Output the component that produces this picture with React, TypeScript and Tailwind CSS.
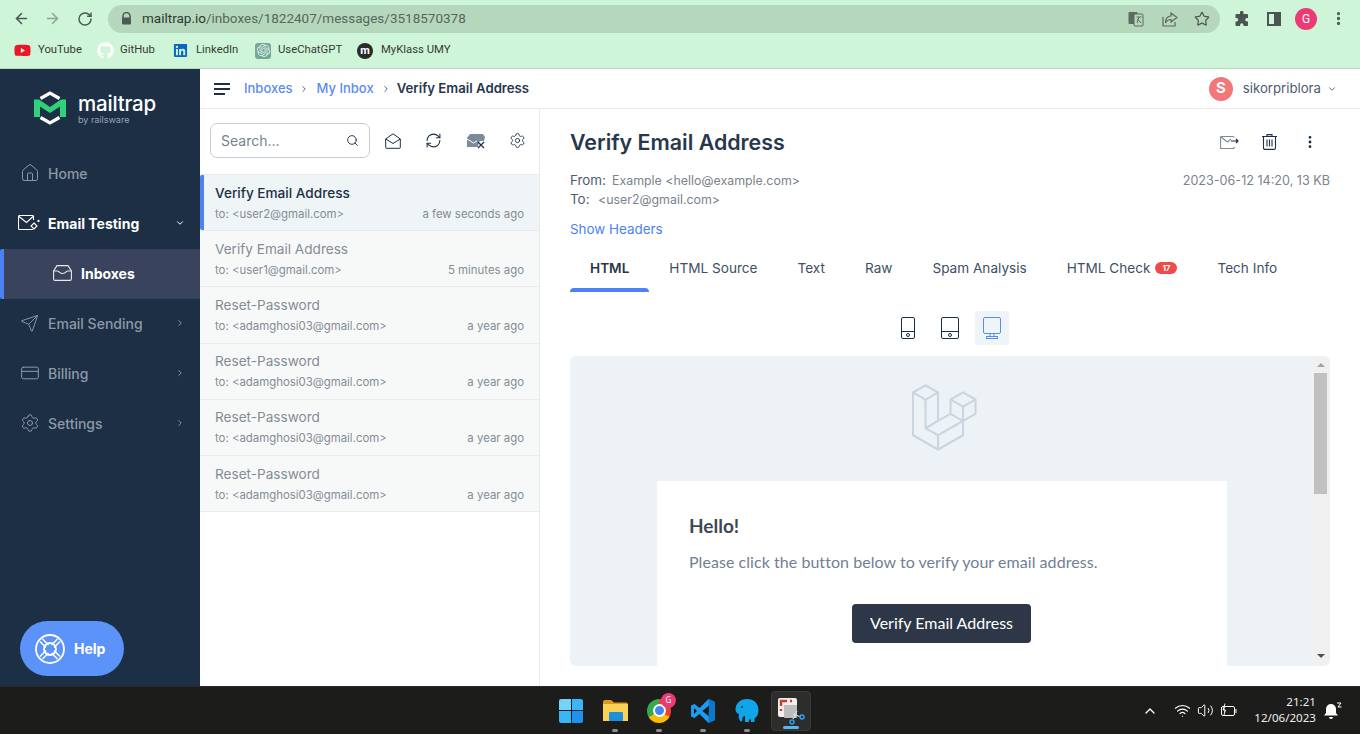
import { ArrowLeft, ArrowRight, RotateCw, Star, ChevronRight, ChevronDown, Search, Home, Send, CreditCard, Settings, MoreVertical, RefreshCw, Wifi, Volume2, ChevronUp } from 'lucide-react'
import { FaGithub, FaYoutube, FaLinkedin } from 'react-icons/fa'
import { SiOpenai } from 'react-icons/si'
import type { ReactNode } from 'react'

const LARAVEL = 'M49.626 11.564a.809.809 0 0 1 .028.209v10.972a.8.8 0 0 1-.402.694l-9.209 5.302V39.25c0 .286-.152.55-.4.694L20.42 51.01c-.044.025-.092.041-.14.058-.018.006-.035.017-.054.022a.805.805 0 0 1-.41 0c-.022-.006-.042-.018-.063-.026-.044-.016-.09-.03-.132-.054L.402 39.944A.801.801 0 0 1 0 39.25V6.334c0-.072.01-.142.028-.21.006-.023.02-.044.028-.067.015-.042.029-.085.051-.124.015-.026.037-.047.055-.071.023-.032.044-.065.071-.093.023-.023.053-.04.079-.06.029-.024.055-.05.088-.069h.001l9.61-5.533a.802.802 0 0 1 .8 0l9.61 5.533h.002c.032.02.059.045.088.068.026.02.055.038.078.06.028.029.048.062.072.094.017.024.04.045.054.071.023.04.036.082.052.124.008.023.022.044.028.068a.809.809 0 0 1 .028.209v20.559l8.008-4.611v-10.51c0-.07.01-.141.028-.208.007-.024.02-.045.028-.068.016-.042.03-.085.052-.124.015-.026.037-.047.054-.071.024-.032.044-.065.072-.093.023-.023.052-.04.078-.06.03-.024.056-.05.088-.069h.001l9.611-5.533a.801.801 0 0 1 .8 0l9.61 5.533c.034.02.06.045.09.068.025.02.054.038.077.06.028.029.048.062.072.094.018.024.04.045.054.071.023.039.036.082.052.124.009.023.022.044.028.068zm-1.574 10.718v-9.124l-3.363 1.936-4.646 2.675v9.124l8.01-4.611zm-9.61 16.505v-9.13l-4.57 2.61-13.05 7.448v9.216l17.62-10.144zM1.602 7.719v31.068L19.22 48.93v-9.214l-9.204-5.209-.003-.002-.004-.002c-.031-.018-.057-.044-.086-.066-.025-.02-.054-.036-.076-.058l-.002-.003c-.026-.025-.044-.056-.066-.084-.02-.027-.044-.05-.06-.078l-.001-.003c-.018-.03-.029-.066-.042-.1-.013-.03-.03-.058-.038-.09v-.001c-.01-.038-.012-.078-.016-.117-.004-.03-.012-.06-.012-.09v-.002-21.481L4.965 9.654 1.602 7.72zm8.81-5.994L2.405 6.334l8.005 4.609 8.006-4.61-8.006-4.608zm4.164 28.764l4.645-2.674V7.719l-3.363 1.936-4.646 2.675v20.096l3.364-1.937zM39.243 7.164l-8.006 4.609 8.006 4.609 8.005-4.61-8.005-4.608zm-.801 10.605l-4.646-2.675-3.363-1.936v9.124l4.645 2.674 3.364 1.937v-9.124zM20.02 38.33l11.743-6.704 5.87-3.35-8-4.606-9.211 5.303-8.395 4.833 7.993 4.524z'

const messages = [
  { subject: 'Verify Email Address', to: 'to: <user2@gmail.com>', when: 'a few seconds ago', active: true },
  { subject: 'Verify Email Address', to: 'to: <user1@gmail.com>', when: '5 minutes ago' },
  { subject: 'Reset-Password', to: 'to: <adamghosi03@gmail.com>', when: 'a year ago' },
  { subject: 'Reset-Password', to: 'to: <adamghosi03@gmail.com>', when: 'a year ago' },
  { subject: 'Reset-Password', to: 'to: <adamghosi03@gmail.com>', when: 'a year ago' },
  { subject: 'Reset-Password', to: 'to: <adamghosi03@gmail.com>', when: 'a year ago' },
]

const tabs = [
  { label: 'HTML', active: true },
  { label: 'HTML Source' },
  { label: 'Text' },
  { label: 'Raw' },
  { label: 'Spam Analysis' },
  { label: 'HTML Check', badge: '17' },
  { label: 'Tech Info' },
]

function Bookmark({ icon, label, className }: { icon: ReactNode; label: string; className: string }) {
  return (
    <div className={`flex items-center whitespace-nowrap ${className}`}>
      {icon}
      <span className="text-[11.3px] text-[#333a36]">{label}</span>
    </div>
  )
}

function BrowserChrome() {
  return (
    <div className="h-[69px] bg-[#cff5d8] border-b border-[#b5d7bb] font-['Roboto',sans-serif]">
      <div className="h-[36px] flex items-center pt-[1px]">
        <div className="w-[108px] flex items-center pl-[13px]">
          <ArrowLeft size={17} strokeWidth={2.2} className="text-[#4b5a52]" />
          <ArrowRight size={17} strokeWidth={2.2} className="text-[#8fa497] ml-[14px]" />
          <RotateCw size={16} strokeWidth={2.2} className="text-[#4b5a52] ml-[16px]" />
        </div>
        <div className="w-[1112px] h-[28px] rounded-full bg-[#b5d7bb] flex items-center">
          <svg width="11" height="13" viewBox="0 0 11 13" className="ml-[13px]">
            <path d="M2 6V4a3.5 3.5 0 0 1 7 0v2" fill="none" stroke="#4b5a52" strokeWidth="1.5" />
            <rect x="1" y="5.5" width="9" height="7" rx="1" fill="#4b5a52" />
          </svg>
          <span className="ml-[10px] text-[13.5px] text-[#55685c]">
            <span className="text-[#2c3a31]">mailtrap.io</span>/inboxes/1822407/messages/3518570378
          </span>
          <div className="ml-auto flex items-center pr-[10px]">
            <svg width="16" height="16" viewBox="0 0 16 16">
              <rect x="0.5" y="1" width="9" height="12" rx="1" fill="#5c6a60" />
              <rect x="6" y="3" width="9" height="12" rx="1" fill="#b5d7bb" stroke="#5c6a60" />
              <path d="M8.5 6h5M11 6l-2 6M9.5 8l3.5 4" stroke="#5c6a60" fill="none" />
            </svg>
            <svg width="16" height="16" viewBox="0 0 16 16" className="ml-[18px]" fill="none" stroke="#5c6a60" strokeWidth="1.2">
              <path d="M1 6v9h12v-4" />
              <path d="M9 2l6 4.5-6 4.5V8.500C6 8.500 4.500 10 3.500 12 3.500 8 5.500 5 9 5z" />
            </svg>
            <Star size={16} strokeWidth={1.8} className="text-[#4b5a52] ml-[16px]" />
          </div>
        </div>
        <div className="flex-1 flex items-center pl-[14px]">
          <svg width="16" height="16" viewBox="0 0 16 16">
            <path fill="#4b5450" d="M6 1.500a1.700 1.700 0 0 1 3.400 0V3H13a1 1 0 0 1 1 1v3h-1a1.800 1.800 0 0 0 0 3.600h1V14a1 1 0 0 1-1 1H9.500v-1a1.700 1.700 0 0 0-3.400 0v1H2.500a1 1 0 0 1-1-1v-3.500h1a1.800 1.800 0 0 0 0-3.600h-1V4a1 1 0 0 1 1-1H6z" />
          </svg>
          <div className="ml-[17px] w-[14px] h-[14px] border-[2px] border-[#4b5450] flex justify-end">
            <div className="w-[5px] bg-[#4b5450]" />
          </div>
          <div className="ml-[14px] w-[22px] h-[22px] rounded-full bg-[#ec3b74] text-white text-[12px] flex items-center justify-center">G</div>
          <MoreVertical size={17} strokeWidth={2.6} className="text-[#4b5450] ml-[13px]" />
        </div>
      </div>
      <div className="h-[32px] flex items-center pl-[14px] pb-[3px]">
        <Bookmark className="w-[83px]" label="YouTube" icon={<FaYoutube size={17} className="text-[#e8172c] mr-[7px]" />} />
        <Bookmark className="w-[76px]" label="GitHub" icon={<FaGithub size={17} className="text-white mr-[6px]" />} />
        <Bookmark className="w-[82px]" label="LinkedIn" icon={<FaLinkedin size={15} className="text-[#0a66c2] mr-[8px]" />} />
        <Bookmark className="w-[102px]" label="UseChatGPT" icon={<span className="w-[16px] h-[16px] rounded-[3px] bg-[#74a89a] flex items-center justify-center mr-[7px]"><SiOpenai size={13} className="text-[#dff0ea]" /></span>} />
        <Bookmark className="w-[95px]" label="MyKlass UMY" icon={<span className="w-[16px] h-[16px] rounded-full bg-[#2a2a2a] text-white text-[11px] font-bold leading-none flex items-center justify-center mr-[8px]">m</span>} />
      </div>
    </div>
  )
}

function NavItem({ icon, label, chevron }: { icon: ReactNode; label: string; chevron?: boolean }) {
  return (
    <div className="h-[50px] flex items-center pl-[20px] pr-[15px] pb-[2px] text-[#8e99a7]">
      <span className="w-[28px] flex items-center">{icon}</span>
      <span className="text-[14px] font-medium">{label}</span>
      {chevron && <ChevronRight size={10} strokeWidth={2} className="ml-auto text-[#a0aab6]" />}
    </div>
  )
}

function Sidebar() {
  return (
    <aside className="w-[200px] shrink-0 bg-[#1c2f45] flex flex-col">
      <div className="h-[80px] flex items-center pl-[34px] pb-[2px]">
        <svg width="32" height="36" viewBox="0 0 32 36" fill="none">
          <path d="M6.500 8.500L16 3l9.500 5.500" stroke="#fff" strokeWidth="3.200" />
          <path d="M0 9.500h5l11 7.500 11-7.500h5V27H26V16.500l-10 6.500-10-6.500V27H0z" fill="#2fd27a" />
          <path d="M6.500 27.500L16 33l9.500-5.500" stroke="#fff" strokeWidth="3.200" />
        </svg>
        <div className="ml-[12px] mt-[2px] font-['Inter',sans-serif] text-white leading-none">
          <div className="text-[20.5px] font-medium tracking-[-0.2px]">mailtrap</div>
          <div className="text-[9px] text-[#98a4b2] mt-[1px]">by railsware</div>
        </div>
      </div>
      <NavItem label="Home" icon={<Home size={20} strokeWidth={1.2} />} />
      <div className="h-[50px] flex items-center pl-[18px] pr-[15px] pb-[2px] text-white">
        <span className="w-[30px] flex items-center">
          <svg width="22" height="16" viewBox="0 0 22 16" fill="none" stroke="#fff" strokeWidth="1.100">
            <path d="M15 14.500H1.500a1 1 0 0 1-1-1V1.500a1 1 0 0 1 1-1h13a1 1 0 0 1 1 1V5" />
            <path d="M1 1.500l7.500 6 6.500-6" />
            <path d="M16 8l3 3-3 3-3-3z" />
            <circle cx="20.500" cy="6" r=".6" />
          </svg>
        </span>
        <span className="text-[14px] font-bold">Email Testing</span>
        <ChevronDown size={10} strokeWidth={2.4} className="ml-auto" />
      </div>
      <div className="h-[50px] flex items-center pl-[49px] pb-[2px] bg-[#3a435e] border-l-[4px] border-[#4d82f3] rounded-l-[2px] text-white">
        <svg width="19" height="16" viewBox="0 0 19 16" fill="none" stroke="#e6e8ee" strokeWidth="1.100">
          <path d="M.6 6v8a1.400 1.400 0 0 0 1.400 1.400h15a1.400 1.400 0 0 0 1.400-1.400V6L15 .6H4z" />
          <path d="M.6 6h4c1 0 1.500 2.500 4.900 2.500S13.500 6 14.500 6h3.900" />
        </svg>
        <span className="ml-[9px] text-[14px] font-bold">Inboxes</span>
      </div>
      <NavItem chevron label="Email Sending" icon={<Send size={19} strokeWidth={1.2} />} />
      <NavItem chevron label="Billing" icon={<CreditCard size={20} strokeWidth={1.2} />} />
      <NavItem chevron label="Settings" icon={<Settings size={20} strokeWidth={1.2} />} />
      <div className="mt-auto mb-[10px] ml-[20px] w-[104px] h-[55px] rounded-full bg-[#5b93fb] flex items-center pl-[15px] text-white">
        <svg width="30" height="30" viewBox="0 0 30 30" fill="none" stroke="#fff" strokeWidth="1.800">
          <circle cx="15" cy="15" r="14" />
          <circle cx="15" cy="15" r="6" />
          <path d="M5 7.500l6 6M7.500 5l6 6M25 7.500l-6 6M22.500 5l-6 6M5 22.500l6-6M7.500 25l6-6M25 22.500l-6-6M22.500 25l-6-6" strokeWidth="1.500" />
        </svg>
        <span className="ml-[9px] text-[14px] font-bold">Help</span>
      </div>
    </aside>
  )
}

function TopBar() {
  return (
    <header className="h-[40px] shrink-0 border-b border-[#e8eaec] flex items-center pl-[14px] pr-[23px]">
      <div className="w-[16px] flex flex-col gap-[3px]">
        <div className="h-[2px] w-[16px] bg-[#1c2f45]" />
        <div className="h-[2px] w-[16px] bg-[#1c2f45]" />
        <div className="h-[2px] w-[11px] bg-[#1c2f45]" />
      </div>
      <span className="ml-[14px] text-[13px] font-medium text-[#5b8def]">Inboxes</span>
      <ChevronRight size={10} strokeWidth={2} className="ml-[6px] text-[#445064]" />
      <span className="ml-[8px] text-[13px] font-medium text-[#5b8def]">My Inbox</span>
      <ChevronRight size={10} strokeWidth={2} className="ml-[7px] text-[#445064]" />
      <span className="ml-[6px] text-[13.2px] font-semibold text-[#28374b]">Verify Email Address</span>
      <div className="ml-auto flex items-center">
        <div className="w-[24px] h-[24px] rounded-full bg-[#f2777a] text-white text-[15px] font-bold flex items-center justify-center">S</div>
        <span className="ml-[10px] text-[13.2px] text-[#4d5c70]">sikorpriblora</span>
        <ChevronDown size={10} strokeWidth={2} className="ml-[6px] text-[#445064]" />
      </div>
    </header>
  )
}

function MessageList() {
  return (
    <div className="w-[340px] shrink-0 border-r border-[#e8eaec] flex flex-col">
      <div className="h-[66px] shrink-0 flex items-center pl-[10px] border-b border-[#e8eaec] pb-[2px]">
        <div className="w-[160px] h-[35px] border border-[#c8ccd6] rounded-[7px] flex items-center justify-between pl-[10px] pr-[10px]">
          <span className="text-[14px] text-[#75828f]">Search...</span>
          <Search size={13} strokeWidth={1.8} className="text-[#28374b]" />
        </div>
        <svg width="16" height="16" viewBox="0 0 16 16" fill="none" stroke="#1c2f45" className="ml-[15px]">
          <path d="M.7 6v8.500a.8.8 0 0 0 .8.8h13a.8.8 0 0 0 .8-.8V6L8 .8z" />
          <path d="M.7 6L8 10.500 15.300 6" />
        </svg>
        <RefreshCw size={17} strokeWidth={1.5} className="ml-[24px] text-[#1c2f45]" />
        <svg width="20" height="16" viewBox="0 0 20 16" fill="none" className="ml-[24px]">
          <path d="M1 14V5l3-4 13 0 2 3-1 4h-4l-1 1-1 5z" fill="#7d8a9a" />
          <path d="M1 6l6.500 4 3.500-2" stroke="#fff" strokeWidth="1" />
          <path d="M12 9l6 6M18 9l-6 6" stroke="#1c2f45" strokeWidth="1.200" />
        </svg>
        <Settings size={17} strokeWidth={1.2} className="ml-[23px] text-[#1c2f45]" />
      </div>
      {messages.map((m, i) => (
        <div
          key={i}
          className={`h-[56.2px] shrink-0 border-b border-[#e8eaec] pl-[15px] pr-[15px] pb-[1px] flex flex-col justify-center ${
            m.active ? 'bg-[#eff4f6] relative' : 'bg-[#f7f9f9]'
          }`}
        >
          {m.active && <div className="absolute left-0 top-0 bottom-0 w-[4px] bg-[#4d82f3] rounded-l-[2px]" />}
          <div className={`text-[13.6px] leading-[20px] ${m.active ? 'font-medium text-[#1c2f45]' : 'text-[#848c95]'}`}>{m.subject}</div>
          <div className="flex justify-between text-[11.4px] leading-[16px] mt-[3px] text-[#848c95]">
            <span>{m.to}</span>
            <span>{m.when}</span>
          </div>
        </div>
      ))}
    </div>
  )
}

function DeviceButton({ active, children }: { active?: boolean; children: ReactNode }) {
  return (
    <div className={`w-[34px] h-[34px] rounded-[3px] flex items-center justify-center ${active ? 'bg-[#eff4f6]' : ''}`}>{children}</div>
  )
}

function Preview() {
  return (
    <div className="mx-[30px] h-[310px] rounded-[6px] bg-[#edf2f7] overflow-hidden flex shrink-0">
      <div className="flex-1 overflow-hidden flex flex-col items-center">
        <svg width="65" height="68" viewBox="0 0 50 52" className="mt-[28px] ml-[4px]">
          <path d={LARAVEL} fill="#cbd5e0" />
        </svg>
        <div className="mt-[29px] w-[570px] flex-1 bg-white px-[32px] pt-[32px] font-['Lato',sans-serif]">
          <div className="text-[19px] leading-[26px] font-bold text-[#3d4852]">Hello!</div>
          <p className="mt-[11px] text-[16px] leading-[24px] text-[#718096] tracking-[0.05px]">
            Please click the button below to verify your email address.
          </p>
          <div className="mt-[30px] flex justify-center pr-[2px]">
            <div className="w-[179px] h-[39px] rounded-[4px] bg-[#2d3748] text-white text-[16px] pb-[1px] pl-[1px] flex items-center justify-center">
              Verify Email Address
            </div>
          </div>
        </div>
      </div>
      <div className="w-[16px] shrink-0 bg-[#f0f0f0] flex flex-col items-center pt-[7px] pb-[8px] pr-[3px]">
        <div className="w-0 h-0 border-x-[4px] border-x-transparent border-b-[4px] border-b-[#a3a3a3]" />
        <div className="mt-[6px] w-[13px] h-[121px] bg-[#c1c1c1]" />
        <div className="mt-auto w-0 h-0 border-x-[4px] border-x-transparent border-t-[4px] border-t-[#505050]" />
      </div>
    </div>
  )
}

function MessagePane() {
  return (
    <div className="flex-1 min-w-0 flex flex-col">
      <div className="h-[62px] shrink-0 flex items-center pl-[30px] pr-[42px] pt-[6px]">
        <h1 className="text-[21.4px] font-semibold text-[#28374b] leading-none">Verify Email Address</h1>
        <div className="ml-auto mb-[2px] flex items-center">
          <svg width="19" height="14" viewBox="0 0 19 14" fill="none" stroke="#7d8a9a" strokeWidth="1.200">
            <path d="M14 12v.5a1 1 0 0 1-1 1H1.500a1 1 0 0 1-1-1v-10a1 1 0 0 1 1-1H13a1 1 0 0 1 1 1" />
            <path d="M1 2l6.500 5 3.500-3" />
            <path d="M11 6h7M16 4l2 2-2 2" stroke="#1c2f45" />
          </svg>
          <svg width="15" height="16" viewBox="0 0 15 16" fill="none" stroke="#1c2f45" strokeWidth="1.100" className="ml-[23px]">
            <path d="M0 2.500h15M5 2.500V.6h5v1.900" />
            <path d="M1.500 2.500V14a1.400 1.400 0 0 0 1.400 1.400h9.200a1.400 1.400 0 0 0 1.400-1.400V2.500" />
            <path d="M5 5.500v7M7.500 5.500v7M10 5.500v7" />
          </svg>
          <MoreVertical size={16} strokeWidth={2.200} className="ml-[25px] text-[#1c2f45]" />
        </div>
      </div>
      <div className="pl-[30px] pr-[30px] text-[12.4px] leading-[19px] text-[#7b838c]">
        <div className="flex items-center">
          <span className="text-[13.4px] text-[#4d5c70] w-[42px]">From:</span>
          <span>Example &lt;hello@example.com&gt;</span>
          <span className="ml-auto text-[12.6px]">2023-06-12 14:20, 13 KB</span>
        </div>
        <div className="flex items-center">
          <span className="text-[13.4px] text-[#4d5c70] w-[28px]">To:</span>
          <span>&lt;user2@gmail.com&gt;</span>
        </div>
      </div>
      <div className="pl-[30px] mt-[11px] text-[13.4px] leading-[18px] text-[#4d82f3]">Show Headers</div>
      <div className="ml-[30px] mt-[8px] h-[46px] shrink-0 flex items-start">
        {tabs.map((t) => (
          <div key={t.label} className="h-[46px] flex flex-col">
            <div className={`flex-1 flex items-center px-[20px] pt-[2px] text-[13.6px] ${t.active ? 'font-semibold text-[#28374b]' : 'text-[#3f4f65]'}`}>
              {t.label}
              {t.badge && <span className="ml-[5px] w-[22px] h-[12px] rounded-full bg-[#f04b4b] text-white text-[8px] font-bold flex items-center justify-center">{t.badge}</span>}
            </div>
            <div className={`h-[4px] rounded-t-[4px] ${t.active ? 'bg-[#4d82f3]' : ''}`} />
          </div>
        ))}
      </div>
      <div className="h-[64px] shrink-0 flex items-start justify-center pt-[19px]">
        <div className="flex items-center gap-[8px]">
          <DeviceButton>
            <svg width="14" height="22" viewBox="0 0 14 22" fill="none" stroke="#1c2f45">
              <rect x=".5" y=".5" width="13" height="21" rx="1.500" />
              <path d="M.5 14.500h13" />
              <circle cx="7" cy="18" r="1.500" />
            </svg>
          </DeviceButton>
          <DeviceButton>
            <svg width="18" height="22" viewBox="0 0 18 22" fill="none" stroke="#1c2f45">
              <rect x=".5" y=".5" width="17" height="21" rx="1.500" />
              <path d="M.5 14.500h17" />
              <circle cx="9" cy="18" r="1.500" />
            </svg>
          </DeviceButton>
          <DeviceButton active>
            <svg width="18" height="22" viewBox="0 0 18 22" fill="none" stroke="#5b8def">
              <rect x=".5" y=".5" width="17" height="16" rx="1.500" />
              <path d="M7 17v3M11 17v3" />
              <rect x="3.500" y="19.500" width="11" height="2" />
            </svg>
          </DeviceButton>
        </div>
      </div>
      <Preview />
    </div>
  )
}

function TaskIcon({ children, dot }: { children: ReactNode; dot?: boolean }) {
  return (
    <div className="w-[44px] h-[48px] flex items-center justify-center relative">
      {children}
      {dot && <div className="absolute bottom-[3px] w-[6px] h-[3px] rounded-full bg-[#8e8e8c]" />}
    </div>
  )
}

function Taskbar() {
  return (
    <div className="h-[48px] shrink-0 bg-[#1c1c1a] flex items-center font-['Noto_Sans',sans-serif] border-t border-[#2a2a28]">
      <div className="w-[549px]" />
      <div className="flex items-center">
        <TaskIcon>
          <div className="grid grid-cols-2 gap-[1px] w-[24px] h-[24px]">
            <div className="bg-[#74d3f8] rounded-tl-[2px]" />
            <div className="bg-[#3ab5f5] rounded-tr-[2px]" />
            <div className="bg-[#3ab5f5] rounded-bl-[2px]" />
            <div className="bg-[#1b93ef] rounded-br-[2px]" />
          </div>
        </TaskIcon>
        <TaskIcon dot>
          <svg width="25" height="23" viewBox="0 0 25 23">
            <path d="M0 3a2 2 0 0 1 2-2h6l3 2.500h12a2 2 0 0 1 2 2V21H0z" fill="#d99a16" />
            <rect y="5" width="25" height="17" fill="#fbd155" />
            <rect x="6" y="13" width="14" height="9" rx="1" fill="#1d8fdb" />
          </svg>
        </TaskIcon>
        <TaskIcon dot>
          <div className="relative w-[24px] h-[24px]">
            <div className="w-[24px] h-[24px] rounded-full bg-[conic-gradient(#ea4335_0_33%,#fbbc04_33%_66%,#34a853_66%)] flex items-center justify-center">
              <div className="w-[13px] h-[13px] rounded-full bg-[#4285f4] border-[2px] border-white" />
            </div>
            <div className="absolute -top-[6px] -right-[5px] w-[15px] h-[15px] rounded-full bg-[#ec3b74] text-white text-[8px] flex items-center justify-center">G</div>
          </div>
        </TaskIcon>
        <TaskIcon dot>
          <svg width="24" height="24" viewBox="0 0 24 24">
            <path d="M17.500 0L24 3v18l-6.500 3-9-9-5 4L0 17.500V6.500L3.500 5l5 4zM18 6.500L11.500 12l6.500 5.500zM3 9v6l3-3z" fill="#1d9bf0" />
            <path d="M17.500 0L24 3v18l-6.500 3V17.500L18 6.500z" fill="#0b78c9" />
          </svg>
        </TaskIcon>
        <TaskIcon dot>
          <svg width="24" height="26" viewBox="0 0 24 26">
            <path d="M12 1c7 0 11.500 4.500 11.500 11 0 4-1.500 7-4 8.500V24h-3.500v-2.500h-2V24H10v-6c-2 0-3 2-2.500 4L6 24c-2-2-3-5-2-8-2-.5-3.500-2-3.500-4.500C.5 6 5 1 12 1z" fill="#10a5e8" />
            <circle cx="7" cy="9" r="1" fill="#0a3650" />
          </svg>
        </TaskIcon>
        <div className="w-[40px] h-[40px] ml-[2px] rounded-[4px] bg-[#2d2d2c] border border-[#3a3a38] flex items-center justify-center relative">
          <svg width="28" height="28" viewBox="0 0 28 28" fill="none">
            <rect x="1" y="1" width="19" height="19" rx="2" fill="#f2f0ee" />
            <path d="M4 9V4h6M13 4h2M4 12v2" stroke="#d0392b" strokeWidth="2.400" />
            <rect x="7" y="8" width="13" height="13" rx="1" fill="#bdbdbd" />
            <path d="M20 14l-4 8M16 17l8 3" stroke="#dcdcdc" strokeWidth="1.200" />
            <circle cx="25" cy="20" r="2" stroke="#2aa0f0" strokeWidth="1.500" />
            <circle cx="15" cy="25" r="2" stroke="#2aa0f0" strokeWidth="1.500" />
          </svg>
          <div className="absolute bottom-[1px] w-[16px] h-[3px] rounded-full bg-[#55b6f0]" />
        </div>
      </div>
      <div className="flex-1 flex items-center justify-end text-white">
        <ChevronUp size={16} strokeWidth={2} className="mr-[16px]" />
        <Wifi size={17} strokeWidth={1.6} className="mr-[6px]" />
        <Volume2 size={17} strokeWidth={1.4} className="mr-[7px]" />
        <svg width="16" height="15" viewBox="0 0 16 15" fill="none" stroke="#fff" className="mr-[17px]">
          <rect x=".5" y="3.500" width="13" height="9" rx="1.500" />
          <path d="M15 6v4" />
          <path d="M4 .5L2 7h2.500L3 12" fill="#fff" strokeWidth=".8" />
        </svg>
        <div className="text-right text-[11.6px] leading-[16px] text-[#eeeeee] mr-[8px] pb-[1px]">
          <div>21:21</div>
          <div>12/06/2023</div>
        </div>
        <svg width="18" height="18" viewBox="0 0 18 18" fill="#fff" className="mr-[18px]">
          <path d="M7 2a5 5 0 0 1 5 5v4l2 2.500H0L2 11V7a5 5 0 0 1 5-5zM5 15h4a2 2 0 0 1-4 0z" />
          <path d="M13 1h4l-3 4h3.500" stroke="#fff" strokeWidth="1" fill="none" />
        </svg>
      </div>
    </div>
  )
}

export default function App() {
  return (
    <div className="w-[1360px] h-[734px] overflow-hidden flex flex-col font-['Inter',sans-serif] bg-white">
      <BrowserChrome />
      <div className="flex-1 min-h-0 flex">
        <Sidebar />
        <div className="flex-1 min-w-0 flex flex-col">
          <TopBar />
          <div className="flex-1 min-h-0 flex">
            <MessageList />
            <MessagePane />
          </div>
        </div>
      </div>
      <Taskbar />
    </div>
  )
}
